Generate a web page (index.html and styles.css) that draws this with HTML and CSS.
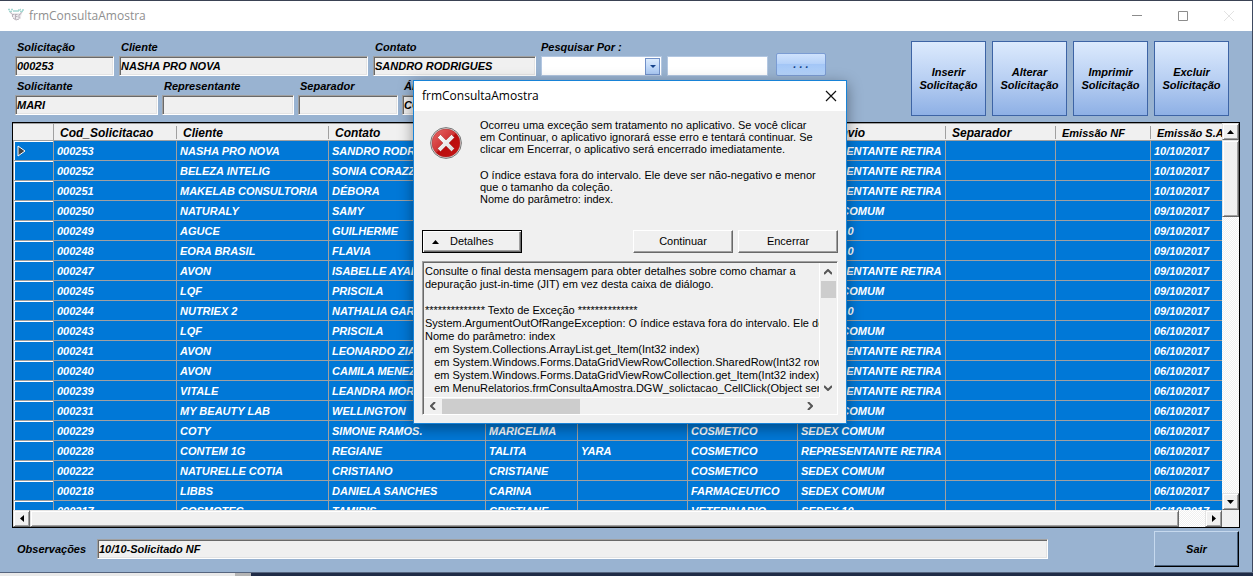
FILE: index.html
```html
<!DOCTYPE html>
<html lang="pt-BR">
<head>
<meta charset="utf-8">
<title>frmConsultaAmostra</title>
<link rel="stylesheet" href="styles.css">
</head>
<body>
<main class="window">
  <header class="titlebar">
    <svg class="logo" viewBox="0 0 16 16" width="16" height="16" aria-hidden="true">
      <path d="M0 1.500h2M1 3.500h3M3 1.500h2M5 3h6M10 2h2M12 1.500h1M12 3.500h3M14 2h2" stroke="#a5d8d2" stroke-width="1.400" fill="none"/>
      <path d="M3 5h11l-1 4-3 3H7L4 9z" fill="#eceaed"/>
      <path d="M2 4.500l2 1M14 4.500l-2 1M4.500 6v3M4.500 6.500h2M7.500 6v5M7.500 6.500h2M7.500 8.500h2M12.500 6.500h-1.500v3.500h1.500M5 10l3 2 3-1" stroke="#b9b1ba" fill="none"/>
    </svg>
    <h1 class="titlebar-text">frmConsultaAmostra</h1>
    <div class="controls">
      <button class="control" aria-label="Minimizar"><svg width="12" height="12"><path d="M1 5.500h10" stroke="#8c8c8c"/></svg></button>
      <button class="control" aria-label="Maximizar"><svg width="12" height="12"><path d="M1.500 1.500h9v9h-9z" stroke="#8c8c8c" fill="none"/></svg></button>
      <button class="control" aria-label="Fechar"><svg width="12" height="12"><path d="M1 1l10 10M11 1L1 11" stroke="#e2e2e2"/></svg></button>
    </div>
  </header>

  <section class="top">
    <div class="fields">
      <div class="line">
        <div class="field w-code"><label for="sol">Solicitação</label><input id="sol" value="000253" readonly></div>
        <div class="field w-client"><label for="cli">Cliente</label><input id="cli" value="NASHA PRO NOVA" readonly></div>
        <div class="field w-contact"><label for="con">Contato</label><input id="con" value="SANDRO RODRIGUES" readonly></div>
        <div class="field w-search"><label class="flush" for="by">Pesquisar Por :</label>
          <div class="combo"><select id="by"><option></option></select><span class="combo-arrow"><svg width="6" height="3"><path d="M0 0h6L3 3z" fill="#15428b"/></svg></span></div>
        </div>
        <input class="plain" aria-label="Texto da pesquisa">
        <button class="dots">. . .</button>
      </div>
      <div class="line tight">
        <div class="field w-requester"><label for="req">Solicitante</label><input id="req" value="MARI" readonly></div>
        <div class="field w-rep"><label for="rep">Representante</label><input id="rep" readonly></div>
        <div class="field w-sep"><label for="sep">Separador</label><input id="sep" readonly></div>
        <div class="field w-area"><label for="area">Área</label><input id="area" value="COSMETICO" readonly></div>
      </div>
    </div>
    <div class="actions">
      <button class="action">Inserir<br>Solicitação</button>
      <button class="action">Alterar<br>Solicitação</button>
      <button class="action">Imprimir<br>Solicitação</button>
      <button class="action">Excluir<br>Solicitação</button>
    </div>
  </section>

  <section class="grid">
    <div class="grid-view">
      <table>
        <colgroup><col class="c-head"><col class="c-code"><col class="c-client"><col class="c-contact"><col class="c-req"><col class="c-std"><col class="c-std"><col class="c-ship"><col class="c-std"><col class="c-nf"><col></colgroup>
        <thead><tr><th></th><th>Cod_Solicitacao</th><th>Cliente</th><th>Contato</th><th></th><th></th><th></th><th>Tipo Envio</th><th>Separador</th><th class="narrow">Emissão NF</th><th class="narrow">Emissão S.A</th></tr></thead>
        <tbody>
          <tr><th><svg width="9" height="12"><path d="M1 1v10l7-5z" fill="#444" stroke="#fff"/></svg></th><td>000253</td><td>NASHA PRO NOVA</td><td>SANDRO RODRIGUES</td><td></td><td></td><td></td><td>REPRESENTANTE RETIRA</td><td></td><td></td><td>10/10/2017</td></tr>
          <tr><th></th><td>000252</td><td>BELEZA INTELIG</td><td>SONIA CORAZZA</td><td></td><td></td><td></td><td>REPRESENTANTE RETIRA</td><td></td><td></td><td>10/10/2017</td></tr>
          <tr><th></th><td>000251</td><td>MAKELAB CONSULTORIA</td><td>DÉBORA</td><td></td><td></td><td></td><td>REPRESENTANTE RETIRA</td><td></td><td></td><td>10/10/2017</td></tr>
          <tr><th></th><td>000250</td><td>NATURALY</td><td>SAMY</td><td></td><td></td><td></td><td>SEDEX COMUM</td><td></td><td></td><td>09/10/2017</td></tr>
          <tr><th></th><td>000249</td><td>AGUCE</td><td>GUILHERME</td><td></td><td></td><td></td><td>SEDEX 10</td><td></td><td></td><td>09/10/2017</td></tr>
          <tr><th></th><td>000248</td><td>EORA BRASIL</td><td>FLAVIA</td><td></td><td></td><td></td><td>SEDEX 10</td><td></td><td></td><td>09/10/2017</td></tr>
          <tr><th></th><td>000247</td><td>AVON</td><td>ISABELLE AYALA</td><td></td><td></td><td></td><td>REPRESENTANTE RETIRA</td><td></td><td></td><td>09/10/2017</td></tr>
          <tr><th></th><td>000245</td><td>LQF</td><td>PRISCILA</td><td></td><td></td><td></td><td>SEDEX COMUM</td><td></td><td></td><td>09/10/2017</td></tr>
          <tr><th></th><td>000244</td><td>NUTRIEX 2</td><td>NATHALIA GARCIA</td><td></td><td></td><td></td><td>SEDEX 10</td><td></td><td></td><td>09/10/2017</td></tr>
          <tr><th></th><td>000243</td><td>LQF</td><td>PRISCILA</td><td></td><td></td><td></td><td>SEDEX COMUM</td><td></td><td></td><td>06/10/2017</td></tr>
          <tr><th></th><td>000241</td><td>AVON</td><td>LEONARDO ZIA</td><td></td><td></td><td></td><td>REPRESENTANTE RETIRA</td><td></td><td></td><td>06/10/2017</td></tr>
          <tr><th></th><td>000240</td><td>AVON</td><td>CAMILA MENEZES</td><td></td><td></td><td></td><td>REPRESENTANTE RETIRA</td><td></td><td></td><td>06/10/2017</td></tr>
          <tr><th></th><td>000239</td><td>VITALE</td><td>LEANDRA MORAES</td><td></td><td></td><td></td><td>REPRESENTANTE RETIRA</td><td></td><td></td><td>06/10/2017</td></tr>
          <tr><th></th><td>000231</td><td>MY BEAUTY LAB</td><td>WELLINGTON</td><td></td><td></td><td></td><td>SEDEX COMUM</td><td></td><td></td><td>06/10/2017</td></tr>
          <tr><th></th><td>000229</td><td>COTY</td><td>SIMONE RAMOS.</td><td>MARICELMA</td><td></td><td>COSMETICO</td><td>SEDEX COMUM</td><td></td><td></td><td>06/10/2017</td></tr>
          <tr><th></th><td>000228</td><td>CONTEM 1G</td><td>REGIANE</td><td>TALITA</td><td>YARA</td><td>COSMETICO</td><td>REPRESENTANTE RETIRA</td><td></td><td></td><td>06/10/2017</td></tr>
          <tr><th></th><td>000222</td><td>NATURELLE COTIA</td><td>CRISTIANO</td><td>CRISTIANE</td><td></td><td>COSMETICO</td><td>SEDEX COMUM</td><td></td><td></td><td>06/10/2017</td></tr>
          <tr><th></th><td>000218</td><td>LIBBS</td><td>DANIELA SANCHES</td><td>CARINA</td><td></td><td>FARMACEUTICO</td><td>SEDEX COMUM</td><td></td><td></td><td>06/10/2017</td></tr>
          <tr><th></th><td>000217</td><td>COSMOTEC</td><td>TAMIRIS</td><td>CRISTIANE</td><td></td><td>VETERINARIO</td><td>SEDEX 10</td><td></td><td></td><td>06/10/2017</td></tr>
        </tbody>
      </table>
    </div>
    <div class="vbar">
      <button class="arrow" aria-label="Subir"><svg width="7" height="4"><path d="M0 4h7L3.500 0z"/></svg></button>
      <div class="thumb"></div>
      <button class="arrow last" aria-label="Descer"><svg width="7" height="4"><path d="M0 0h7L3.500 4z"/></svg></button>
    </div>
    <div class="hbar">
      <button class="arrow" aria-label="Esquerda"><svg width="4" height="7"><path d="M4 0v7L0 3.500z"/></svg></button>
      <div class="thumb"></div>
      <button class="arrow last" aria-label="Direita"><svg width="4" height="7"><path d="M0 0v7l4-3.500z"/></svg></button>
    </div>
  </section>

  <footer class="bottom">
    <label for="obs">Observações</label>
    <input id="obs" value="10/10-Solicitado NF" readonly>
    <button class="exit">Sair</button>
  </footer>
</main>
<div class="desktop"><div class="behind"></div></div>

<section class="dialog" role="dialog" aria-labelledby="dlg-title">
  <header class="dialog-title">
    <h2 id="dlg-title" class="titlebar-text">frmConsultaAmostra</h2>
    <button class="dialog-close" aria-label="Fechar"><svg width="12" height="12"><path d="M1 1l10 10M11 1L1 11" stroke="#111" stroke-width="1.200"/></svg></button>
  </header>
  <div class="message">
    <svg class="error" viewBox="0 0 32 32" width="32" height="32" aria-hidden="true">
      <defs>
        <linearGradient id="red" x1="0" y1="0" x2="1" y2="1"><stop offset="0" stop-color="#e86a6a"/><stop offset=".48" stop-color="#d03434"/><stop offset=".52" stop-color="#b80c0c"/><stop offset="1" stop-color="#c81414"/></linearGradient>
        <linearGradient id="cross" x1="0" y1="0" x2="1" y2="1"><stop offset="0" stop-color="#fff"/><stop offset="1" stop-color="#d8d8d8"/></linearGradient>
      </defs>
      <circle cx="16" cy="16" r="15.400" fill="#e4e4e4" stroke="#777"/>
      <circle cx="16" cy="16" r="14" fill="url(#red)" stroke="#a03030" stroke-width=".5"/>
      <path d="M10.500 7.500L16 13l5.500-5.500 3 3L19 16l5.500 5.500-3 3L16 19l-5.500 5.500-3-3L13 16l-5.500-5.500z" fill="url(#cross)" stroke="#a01010" stroke-width=".4"/>
    </svg>
    <div>
      <p>Ocorreu uma exceção sem tratamento no aplicativo. Se você clicar<br>em Continuar, o aplicativo ignorará esse erro e tentará continuar. Se<br>clicar em Encerrar, o aplicativo será encerrado imediatamente.</p>
      <p>O índice estava fora do intervalo. Ele deve ser não-negativo e menor<br>que o tamanho da coleção.<br>Nome do parâmetro: index.</p>
    </div>
  </div>
  <div class="dialog-buttons">
    <button class="btn default"><svg width="7" height="4"><path d="M0 4h7L3.500 0z"/></svg>Detalhes</button>
    <button class="btn">Continuar</button>
    <button class="btn">Encerrar</button>
  </div>
  <div class="details">
    <textarea aria-label="Detalhes" readonly wrap="off">Consulte o final desta mensagem para obter detalhes sobre como chamar a
depuração just-in-time (JIT) em vez desta caixa de diálogo.

************** Texto de Exceção **************
System.ArgumentOutOfRangeException: O índice estava fora do intervalo. Ele deve
Nome do parâmetro: index
   em System.Collections.ArrayList.get_Item(Int32 index)
   em System.Windows.Forms.DataGridViewRowCollection.SharedRow(Int32 rowIndex)
   em System.Windows.Forms.DataGridViewRowCollection.get_Item(Int32 index)
   em MenuRelatorios.frmConsultaAmostra.DGW_solictacao_CellClick(Object sender</textarea>
    <div class="flat-v">
      <svg width="8" height="6"><path d="M0 5l4-4 4 4" /></svg>
      <div class="flat-thumb"></div>
      <svg class="last" width="8" height="6"><path d="M0 1l4 4 4-4" /></svg>
    </div>
    <div class="flat-h">
      <svg width="6" height="8"><path d="M5 0L1 4l4 4" /></svg>
      <div class="flat-thumb"></div>
      <svg class="last" width="6" height="8"><path d="M1 0l4 4-4 4" /></svg>
    </div>
  </div>
</section>
</body>
</html>
```
FILE: styles.css
```css
* { box-sizing: border-box; }

body {
  margin: 0;
  height: 100vh;
  display: flex;
  flex-direction: column;
  overflow: hidden;
  font: 11px/13px "Liberation Sans", Arial, sans-serif;
  color: #000;
}

button, input, select, textarea { font: inherit; color: inherit; margin: 0; border-radius: 0; }
button { padding: 0; }
svg { display: block; flex: none; }

.window {
  flex: 1;
  min-height: 0;
  display: flex;
  flex-direction: column;
  border-top: 1px solid #3a4254;
  border-right: 1px solid #3f4a60;
  background: #99b3d1;
  font-weight: bold;
  font-style: italic;
}

.titlebar {
  height: 30px;
  flex: none;
  display: flex;
  align-items: center;
  gap: 5px;
  padding-left: 8px;
  background: #fff;
}
.titlebar-text { margin: 0; font: 12px/16px "Open Sans", "Noto Sans", sans-serif; }
.titlebar .titlebar-text { color: #8f8f8f; }
.controls { margin-left: auto; display: flex; }
.control {
  width: 46px;
  height: 28px;
  display: flex;
  align-items: center;
  justify-content: center;
  border: 0;
  background: none;
}

.top {
  display: flex;
  justify-content: space-between;
  padding: 10px 23px 6px 15px;
}
.fields { display: flex; flex-direction: column; gap: 4px; }
.line { display: flex; align-items: flex-end; gap: 5px; }
.line.tight { gap: 4px; }
.field { display: flex; flex-direction: column; }
.field label { height: 15px; padding-left: 2px; }
.field label.flush { padding-left: 0; }

.field input, .bottom input {
  width: 100%;
  height: 20px;
  padding: 0 1px;
  border: 1px solid;
  border-color: #a0a0a0 #fff #fff #a0a0a0;
  box-shadow: inset 1px 1px #696969, inset -1px -1px #e3e3e3;
  background: #f0f0f0;
  font-weight: bold;
  font-style: italic;
  outline: 0;
}
.w-code { width: 99px; }
.w-client { width: 249px; }
.w-contact { width: 163px; }
.w-search { width: 121px; }
.w-requester { width: 143px; }
.w-rep { width: 132px; }
.w-sep { width: 100px; }
.w-area { width: 100px; }

.combo { position: relative; height: 20px; }
.combo select {
  appearance: none;
  width: 100%;
  height: 20px;
  border: 1px solid #b3c7e1;
  background: #fff;
}
.combo-arrow {
  position: absolute;
  top: 2px;
  right: 2px;
  width: 15px;
  height: 17px;
  display: flex;
  align-items: center;
  justify-content: center;
  border: 1px solid #7090c8;
  background: linear-gradient(#dcebfd, #a9c8f3);
  pointer-events: none;
}
.plain {
  width: 101px;
  height: 20px;
  border: 1px solid #b3c7e1;
  background: #fff;
}
.dots {
  width: 50px;
  height: 23px;
  margin-left: 3px;
  border: 1px solid #7b9cd3;
  border-radius: 2px;
  background: linear-gradient(#cfe2fc, #b6d2f9 45%, #a3c6f6 50%, #b5d4fb);
  color: #15428b;
  font-weight: bold;
}

.actions { display: flex; gap: 6px; }
.action {
  width: 75px;
  height: 75px;
  border: 1px solid #3d64a5;
  background: linear-gradient(#dceafd, #b9d0f3 50%, #8eb0e5);
  font-weight: bold;
  font-style: italic;
}

.grid {
  flex: 1;
  min-height: 0;
  margin: 0 12px;
  display: grid;
  grid-template: minmax(0, 1fr) 17px / minmax(0, 1fr) 17px;
  border: 1px solid #000;
  background: #f0f0f0;
}
.grid-view { overflow: hidden; border-top: 1px solid #a0a0a0; }
.grid table { width: 100%; table-layout: fixed; border-collapse: separate; border-spacing: 0; }
.c-head { width: 41px; }
.c-code { width: 123px; }
.c-client { width: 152px; }
.c-contact { width: 157px; }
.c-req { width: 92px; }
.c-std { width: 110px; }
.c-ship { width: 148px; }
.c-nf { width: 95px; }

.grid th, .grid td {
  overflow: hidden;
  white-space: nowrap;
  text-align: left;
  font-weight: bold;
  border-right: 1px solid #a0a0a0;
  border-bottom: 1px solid #a0a0a0;
}
.grid thead th {
  height: 17px;
  padding: 2px 0 0 6px;
  font-size: 12px;
  line-height: 14px;
  border-right: 0;
  background: linear-gradient(#a0a0a0, #a0a0a0) right 2px / 1px 13px no-repeat #f0f0f0;
}
.grid thead th.narrow { font-size: 11px; }
.grid thead th:first-child { border-right: 1px solid #a0a0a0; background: #f0f0f0; }
.grid thead th:last-child { background: #f0f0f0; }
.grid tbody th, .grid tbody td {
  height: 20px;
  padding: 1px 0 0 3px;
  background: #0078d7;
  color: #fff;
}
.grid tbody th {
  border-left: 1px solid #a0a0a0;
  box-shadow: inset 1px 1px #fff;
}
.grid td:last-child, .grid th:last-child { border-right: 0; }

.vbar, .hbar {
  display: flex;
  background: repeating-conic-gradient(#fff 0 25%, #f0f0f0 0 50%) 0 0 / 2px 2px;
}
.vbar { flex-direction: column; }
.vbar .arrow { height: 17px; }
.hbar .arrow { width: 17px; }
.arrow, .vbar .thumb, .hbar .thumb {
  border: 1px solid;
  border-color: #e3e3e3 #696969 #696969 #e3e3e3;
  box-shadow: inset 1px 1px #fff, inset -1px -1px #a0a0a0;
  background: #f0f0f0;
}
.arrow { display: flex; align-items: center; justify-content: center; }
.arrow.last { margin-top: auto; }
.hbar .arrow.last { margin: 0 0 0 auto; }
.vbar .thumb { height: 20%; }
.hbar .thumb { width: 95%; }

.bottom {
  display: flex;
  align-items: center;
  padding: 3px 13px 5px 17px;
}
.bottom label { width: 80px; }
.bottom input { flex: 1; margin-right: 106px; }
.exit {
  width: 85px;
  height: 36px;
  border: 1px solid;
  border-color: #c6d9ee #000 #000 #c6d9ee;
  box-shadow: inset -1px -1px #48607c;
  background: #99b3d1;
  font-weight: bold;
  font-style: italic;
}

.desktop { height: 4px; flex: none; background: #202c47; border-top: 1px solid #56657e; }
.behind {
  width: 20%;
  height: 3px;
  background: #e9e9e9;
  border-right: 16px solid #b4b4b4;
}

.dialog {
  position: absolute;
  left: 413px;
  top: 80px;
  width: 434px;
  border: 1px solid #1883d7;
  background: #f0f0f0;
  box-shadow: 0 4px 14px rgba(0, 0, 0, .4);
}
.dialog-title {
  height: 30px;
  display: flex;
  align-items: center;
  justify-content: space-between;
  padding: 0 9px 0 8px;
  background: #fff;
}
.dialog-close { border: 0; background: none; }
.message {
  display: flex;
  gap: 18px;
  padding: 8px 16px 0;
  line-height: 12px;
  white-space: nowrap;
}
.message p { margin: 0 0 14px; }
.error { margin-top: 8px; }
.dialog-buttons { display: flex; gap: 5px; padding: 11px 8px 8px; }
.btn {
  width: 100px;
  height: 23px;
  border: 1px solid;
  border-color: #fff #696969 #696969 #fff;
  box-shadow: inset -1px -1px #a0a0a0;
  background: #f0f0f0;
}
.btn.default {
  display: flex;
  align-items: center;
  gap: 11px;
  padding-left: 9px;
  margin-right: auto;
  border-color: #000;
  box-shadow: inset 1px 1px #fff, inset -1px -1px #696969, inset -2px -2px #a0a0a0;
}
.details {
  margin: 0 8px 8px;
  display: grid;
  grid-template: 134px 17px / minmax(0, 1fr) 17px;
  border: 1px solid;
  border-color: #a0a0a0 #fff #fff #a0a0a0;
  box-shadow: inset 1px 1px #696969;
  padding: 1px 1px 0;
}
.details textarea {
  display: block;
  width: 100%;
  height: 100%;
  padding: 2px 0 0 1px;
  border: 0;
  outline: 0;
  resize: none;
  overflow: hidden;
  white-space: pre;
  background: none;
  line-height: 13px;
}
.flat-v, .flat-h { display: flex; align-items: center; }
.flat-v { flex-direction: column; gap: 6px; padding: 6px 0; border-left: 1px solid #fff; }
.flat-h { gap: 6px; padding: 0 6px; border-top: 1px solid #fff; }
.flat-v path, .flat-h path { fill: none; stroke: #555; stroke-width: 2; }
.flat-thumb { background: #cdcdcd; }
.flat-v .flat-thumb { width: 15px; height: 17px; }
.flat-h .flat-thumb { width: 36%; height: 15px; }
.flat-v .last { margin-top: auto; }
.flat-h .last { margin-left: auto; }
```
